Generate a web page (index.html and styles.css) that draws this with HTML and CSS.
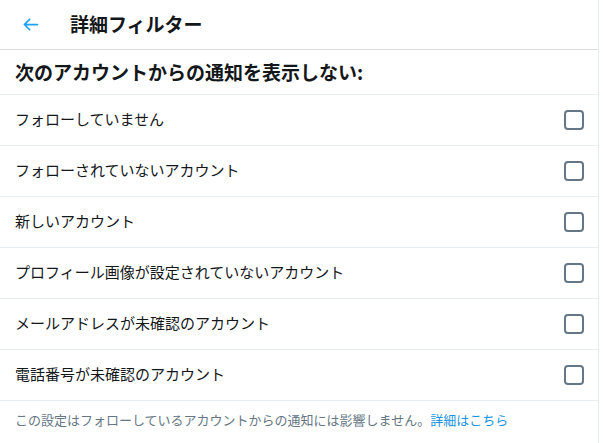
FILE: index.html
```html
<!DOCTYPE html>
<html lang="ja">
<head>
    <meta charset="UTF-8">
    <title>詳細フィルター</title>
    <link rel="stylesheet" href="styles.css">
</head>
<body>
    <div class="panel">
        <!-- Header -->
        <div class="header">
            <button class="back-button" aria-label="戻る">
                <svg viewBox="0 0 24 24" width="21" height="21">
                    <path d="M20 11H7.414l4.293-4.293a1 1 0 0 0-1.414-1.414l-6 6a1 1 0 0 0 0 1.414l6 6a1 1 0 0 0 1.414-1.414L7.414 13H20a1 1 0 1 0 0-2z" fill="#1da1f2"/>
                </svg>
            </button>
            <h1 class="title">詳細フィルター</h1>
        </div>

        <h2 class="section-title">次のアカウントからの通知を表示しない:</h2>

        <label class="filter-row">
            <span class="filter-label">フォローしていません</span>
            <span class="checkbox"></span>
        </label>
        <label class="filter-row">
            <span class="filter-label">フォローされていないアカウント</span>
            <span class="checkbox"></span>
        </label>
        <label class="filter-row">
            <span class="filter-label">新しいアカウント</span>
            <span class="checkbox"></span>
        </label>
        <label class="filter-row">
            <span class="filter-label">プロフィール画像が設定されていないアカウント</span>
            <span class="checkbox"></span>
        </label>
        <label class="filter-row">
            <span class="filter-label">メールアドレスが未確認のアカウント</span>
            <span class="checkbox"></span>
        </label>
        <label class="filter-row">
            <span class="filter-label">電話番号が未確認のアカウント</span>
            <span class="checkbox"></span>
        </label>

        <p class="note">この設定はフォローしているアカウントからの通知には影響しません。<a href="#">詳細はこちら</a></p>
    </div>
</body>
</html>
```

FILE: styles.css
```css
/* Reset */
* {
    margin: 0;
    padding: 0;
    box-sizing: border-box;
}

body {
    font-family: 'Noto Sans CJK JP', 'Noto Sans', sans-serif;
    background-color: #fff;
    color: #14171a;
}

/* Panel */
.panel {
    width: 599px;
    min-height: 443px;
    border-right: 1px solid #e6ecf0;
}

/* Header */
.header {
    display: flex;
    align-items: center;
    height: 50px;
    padding: 0 15px 0 14px;
    border-bottom: 1px solid #d9dde0;
}

.back-button {
    width: 32px;
    height: 32px;
    margin-right: 24px;
    display: flex;
    align-items: center;
    justify-content: center;
    border: none;
    background: none;
    cursor: pointer;
}

.title {
    font-size: 19px;
    font-weight: bold;
    line-height: 1;
    margin-top: -2px;
}

/* Section title */
.section-title {
    font-size: 19px;
    font-weight: bold;
    height: 45px;
    padding: 0 15px 1px;
    display: flex;
    align-items: center;
    border-bottom: 1px solid #e6ecf0;
}

/* Filter rows */
.filter-row {
    display: flex;
    align-items: center;
    justify-content: space-between;
    height: 51px;
    padding: 0 15px;
    border-bottom: 1px solid #e6ecf0;
    font-size: 15px;
    color: #14171a;
    cursor: pointer;
}

.filter-label {
    margin-top: -3px;
}

.checkbox {
    width: 20px;
    height: 20px;
    border: 2px solid #657786;
    border-radius: 4px;
    margin-right: -1px;
}

/* Footer note */
.note {
    font-size: 13px;
    color: #657786;
    padding: 9px 15px;
}

.note a {
    color: #1b95e0;
    text-decoration: none;
}
```
